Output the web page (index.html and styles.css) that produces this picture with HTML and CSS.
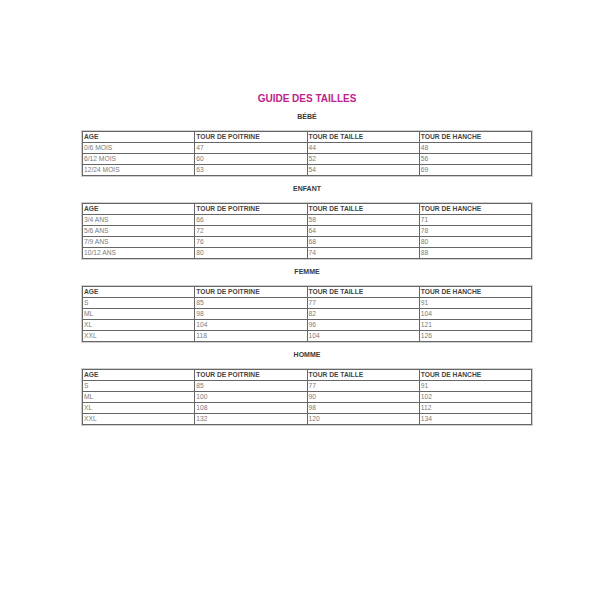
FILE: index.html
```html
<!DOCTYPE html>
<html lang="fr">
<head>
<meta charset="utf-8">
<title>Guide des tailles</title>
<link rel="stylesheet" href="styles.css">
</head>
<body>
<div class="page">
  <h1 class="title">GUIDE DES TAILLES</h1>

  <h2 class="section">BÉBÉ</h2>
  <table class="sizes">
    <tr class="head"><td>AGE</td><td>TOUR DE POITRINE</td><td>TOUR DE TAILLE</td><td>TOUR DE HANCHE</td></tr>
    <tr><td>0/6 MOIS</td><td>47</td><td>44</td><td>48</td></tr>
    <tr><td>6/12 MOIS</td><td>60</td><td>52</td><td>56</td></tr>
    <tr><td>12/24 MOIS</td><td>63</td><td>54</td><td>69</td></tr>
  </table>

  <h2 class="section">ENFANT</h2>
  <table class="sizes">
    <tr class="head"><td>AGE</td><td>TOUR DE POITRINE</td><td>TOUR DE TAILLE</td><td>TOUR DE HANCHE</td></tr>
    <tr><td>3/4 ANS</td><td>66</td><td>58</td><td>71</td></tr>
    <tr><td>5/6 ANS</td><td>72</td><td>64</td><td>78</td></tr>
    <tr><td>7/9 ANS</td><td>76</td><td>68</td><td>80</td></tr>
    <tr><td>10/12 ANS</td><td>80</td><td>74</td><td>88</td></tr>
  </table>

  <h2 class="section">FEMME</h2>
  <table class="sizes">
    <tr class="head"><td>AGE</td><td>TOUR DE POITRINE</td><td>TOUR DE TAILLE</td><td>TOUR DE HANCHE</td></tr>
    <tr><td>S</td><td>85</td><td>77</td><td>91</td></tr>
    <tr><td>ML</td><td>98</td><td>82</td><td>104</td></tr>
    <tr><td>XL</td><td>104</td><td>96</td><td>121</td></tr>
    <tr><td>XXL</td><td>118</td><td>104</td><td>126</td></tr>
  </table>

  <h2 class="section">HOMME</h2>
  <table class="sizes">
    <tr class="head"><td>AGE</td><td>TOUR DE POITRINE</td><td>TOUR DE TAILLE</td><td>TOUR DE HANCHE</td></tr>
    <tr><td>S</td><td>85</td><td>77</td><td>91</td></tr>
    <tr><td>ML</td><td>100</td><td>90</td><td>102</td></tr>
    <tr><td>XL</td><td>108</td><td>98</td><td>112</td></tr>
    <tr><td>XXL</td><td>132</td><td>120</td><td>134</td></tr>
  </table>
</div>
</body>
</html>
```
FILE: styles.css
```css
html, body {
  margin: 0;
  padding: 0;
  background: #ffffff;
}

.page {
  width: 600px;
  height: 600px;
  box-sizing: border-box;
  padding: 93px 0 0 82px;
  font-family: "Liberation Sans", Arial, sans-serif;
}

.title {
  width: 450px;
  margin: 0;
  text-align: center;
  font-size: 10px;
  line-height: 12px;
  font-weight: bold;
  color: #c0228a;
}

.section {
  width: 450px;
  margin: 0;
  text-align: center;
  font-size: 7px;
  line-height: 9px;
  font-weight: bold;
  color: #3a3a3a;
}

.title + .section {
  margin-top: 7px;
}

.sizes + .section {
  margin-top: 8px;
}

.sizes {
  width: 450px;
  border-collapse: collapse;
  table-layout: fixed;
  margin-top: 10px;
  border: 1px solid #777777;
  box-shadow: 0 0 0 1px #cfcfcf;
}

.sizes td {
  border: 1px solid #666666;
  padding: 0 1px;
  height: 10px;
  font-size: 6.7px;
  line-height: 10px;
  color: #7a7a7a;
  white-space: nowrap;
  overflow: hidden;
}

.sizes .head td {
  color: #444444;
  font-weight: bold;
}
```
